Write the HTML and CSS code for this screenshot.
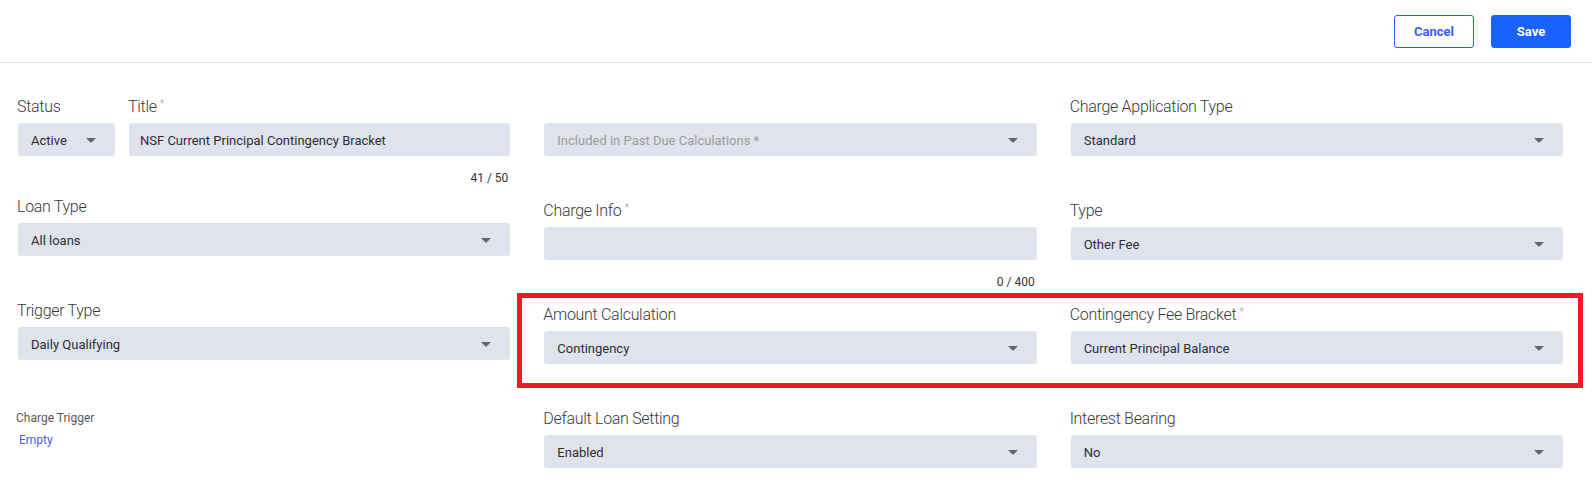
FILE: index.html
```html
<!DOCTYPE html>
<html>
<head>
    <title>Edit Charge</title>
    <link rel="stylesheet" href="styles.css">
</head>
<body>
    <header class="topbar">
        <button class="btn btn-outline">Cancel</button>
        <button class="btn btn-primary">Save</button>
    </header>

    <main class="form">
        <div class="col col-first">
            <div class="title-row">
                <div class="field field-status">
                    <label>Status</label>
                    <div class="box select">Active <span class="caret"></span></div>
                </div>
                <div class="field field-title">
                    <label>Title<span class="req">*</span></label>
                    <div class="box input">NSF Current Principal Contingency Bracket</div>
                    <div class="helper short"><span class="counter">41 / 50</span></div>
                </div>
            </div>
            <div class="field">
                <label>Loan Type</label>
                <div class="box select">All loans <span class="caret"></span></div>
                <div class="helper"></div>
            </div>
            <div class="field">
                <label>Trigger Type</label>
                <div class="box select">Daily Qualifying <span class="caret"></span></div>
                <div class="helper"></div>
            </div>
            <div class="small-label">Charge Trigger</div>
            <a class="empty-link">Empty</a>
        </div>

        <div class="col">
            <div class="field">
                <label></label>
                <div class="box select placeholder">Included in Past Due Calculations * <span class="caret"></span></div>
                <div class="helper"></div>
            </div>
            <div class="field">
                <label>Charge Info<span class="req">*</span></label>
                <div class="box input"></div>
                <div class="helper"><span class="counter">0 / 400</span></div>
            </div>
            <div class="field">
                <label>Amount Calculation</label>
                <div class="box select">Contingency <span class="caret"></span></div>
                <div class="helper"></div>
            </div>
            <div class="field">
                <label>Default Loan Setting</label>
                <div class="box select">Enabled <span class="caret"></span></div>
            </div>
        </div>

        <div class="col">
            <div class="field">
                <label>Charge Application Type</label>
                <div class="box select">Standard <span class="caret"></span></div>
                <div class="helper"></div>
            </div>
            <div class="field">
                <label>Type</label>
                <div class="box select">Other Fee <span class="caret"></span></div>
                <div class="helper"></div>
            </div>
            <div class="field">
                <label>Contingency Fee Bracket<span class="req">*</span></label>
                <div class="box select">Current Principal Balance <span class="caret"></span></div>
                <div class="helper"></div>
            </div>
            <div class="field">
                <label>Interest Bearing</label>
                <div class="box select">No <span class="caret"></span></div>
            </div>
        </div>
    </main>

    <!-- highlight drawn over the amount fields -->
    <div class="highlight"></div>
</body>
</html>
```

FILE: styles.css
```css
body {
    margin: 0;
    font-family: Roboto, "Liberation Sans", sans-serif;
    color: #333;
    background: #fff;
}

.topbar {
    height: 62px;
    border-bottom: 1px solid #e2e2e2;
    display: flex;
    justify-content: flex-end;
    align-items: center;
    gap: 17px;
    padding-right: 21px;
}

.btn {
    width: 80px;
    height: 33px;
    border-radius: 3px;
    font-family: Roboto, "Liberation Sans", sans-serif;
    font-size: 13px;
    font-weight: 700;
    cursor: pointer;
}

.btn-outline {
    background: #fff;
    border: 1px solid #1a62ff;
    color: #3a5bf5;
}

.btn-primary {
    background: #1a62ff;
    border: 1px solid #1a62ff;
    color: #fff;
}

.form {
    display: grid;
    grid-template-columns: 1fr 1fr 1fr;
    column-gap: 34px;
    padding: 33px 29px 0 18px;
}

.col {
    display: flex;
    flex-direction: column;
}

.title-row {
    display: flex;
    gap: 14px;
}

.field-status {
    width: 97px;
}

.field-title {
    flex: 1;
}

label {
    display: block;
    height: 20px;
    line-height: 20px;
    font-size: 16px;
    font-weight: 300;
    letter-spacing: -0.3px;
    color: #3a3a3a;
    padding-top: 1px;
    margin: 0 0 6px -1px;
    white-space: nowrap;
}

.req {
    font-size: 11px;
    color: #aaa;
    vertical-align: top;
    line-height: 14px;
    margin-left: 3px;
}

.box {
    height: 33px;
    background: #dfe3eb;
    border-radius: 3px;
    box-sizing: border-box;
    display: flex;
    align-items: center;
    font-size: 13px;
    color: #2d2d3a;
    padding: 1px 13px 0;
}

.input {
    padding: 1px 11px 0;
}

.select {
    justify-content: space-between;
    padding-right: 19px;
}

.placeholder {
    color: #9c9c9c;
}

.caret {
    width: 0;
    height: 0;
    border-left: 5px solid transparent;
    border-right: 5px solid transparent;
    border-top: 5px solid #666;
}

.helper {
    height: 44px;
    text-align: right;
}

.helper.short {
    height: 40px;
}

.counter {
    display: inline-block;
    margin-top: 14px;
    margin-right: 2px;
    line-height: 16px;
    font-size: 12px;
    color: #333;
}

.small-label {
    margin-top: 6px;
    margin-left: -2px;
    line-height: 16px;
    font-size: 12px;
    color: #5a5a5a;
}

.empty-link {
    display: block;
    margin-top: 6px;
    margin-left: 1px;
    line-height: 16px;
    font-size: 12px;
    color: #4a5cf5;
}

.highlight {
    position: absolute;
    left: 517px;
    top: 293px;
    width: 1066px;
    height: 95px;
    border: 5px solid #ec1c24;
    box-sizing: border-box;
    pointer-events: none;
}
```
